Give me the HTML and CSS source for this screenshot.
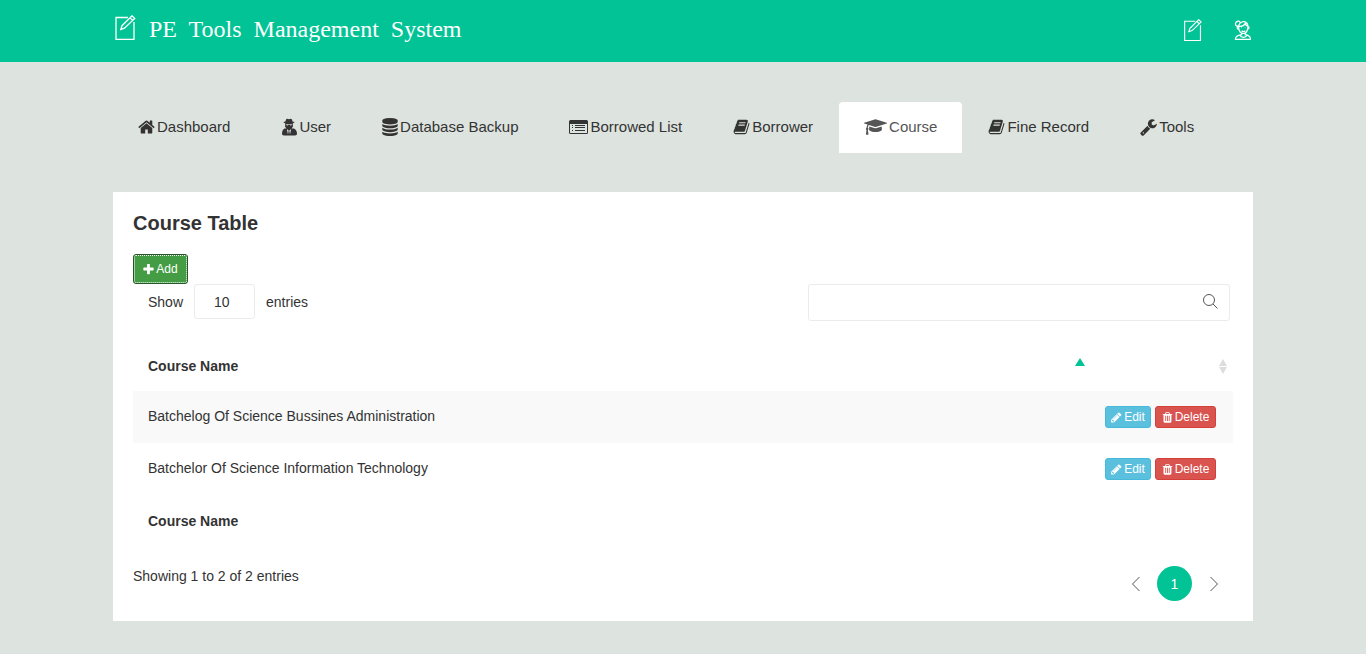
FILE: index.html
```html
<!DOCTYPE html>
<html lang="en">
<head>
<meta charset="utf-8">
<meta name="viewport" content="width=device-width, initial-scale=1">
<title>PE Tools Management System</title>
<link rel="stylesheet" href="styles.css">
</head>
<body>
<svg class="defs" aria-hidden="true">
  <symbol id="note" viewBox="0 0 20 25"><path d="M12.500 2.500H.5v22h18V7M16.500 .8l2.700 2.700L9 13.200l-3.700 1.200 1.200-3.700zM14.500 2.700l2.700 2.700"/></symbol>
  <symbol id="book" viewBox="0 0 1792 1792"><path d="M1703 478q40 57 18 129l-275 906q-19 64-76.500 107.500t-122.500 43.500h-923q-77 0-148.500-53.500t-99.500-131.500q-24-67-2-127 0-4 3-27t4-37q1-8-3-21.500t-3-19.500q2-11 8-21t16.500-23.500 16.500-23.500q23-38 45-91.500t30-91.500q3-10 .5-30t-.5-28q3-11 17-28t17-23q21-36 42-92t25-90q1-9-2.500-32t.5-28q4-13 22-30.500t22-22.500q19-26 42.500-84.500t27.500-96.500q1-8-3-25.500t-2-26.500q2-8 9-18t18-23 17-21q8-12 16.500-30.500t15-35 16-36 19.500-32 26.500-23.500 36-11.500 47.500 5.500l-1 3q38-9 51-9h761q74 0 114 56t18 130l-274 906q-36 119-71.500 153.500t-128.500 34.500h-869q-27 0-38 15-11 16-1 43 24 70 144 70h923q29 0 56-15.500t35-41.500l300-987q7-22 5-57 38 15 59 43zm-1064 2q-4 13 2 22.500t20 9.500h608q13 0 25.500-9.500t16.500-22.500l21-64q4-13-2-22.500t-20-9.500h-608q-13 0-25.500 9.500t-16.500 22.500zm-83 256q-4 13 2 22.500t20 9.500h608q13 0 25.500-9.500t16.500-22.500l21-64q4-13-2-22.500t-20-9.500h-608q-13 0-25.500 9.500t-16.500 22.500z"/></symbol>
  <symbol id="pencil" viewBox="100 100 1640 1600"><path d="M491 1536l91-91-235-235-91 91v107h128v128h107zm523-928q0-22-22-22-10 0-17 7l-542 542q-7 7-7 17 0 22 22 22 10 0 17-7l542-542q7-7 7-17zm-54-192l416 416-832 832h-416v-416zm683 96q0 53-37 90l-166 166-416-416 166-165q36-38 90-38 53 0 91 38l235 234q37 39 37 91z"/></symbol>
  <symbol id="trash" viewBox="100 100 1600 1600"><path d="M704 1376v-704q0-14-9-23t-23-9h-64q-14 0-23 9t-9 23v704q0 14 9 23t23 9h64q14 0 23-9t9-23zm256 0v-704q0-14-9-23t-23-9h-64q-14 0-23 9t-9 23v704q0 14 9 23t23 9h64q14 0 23-9t9-23zm256 0v-704q0-14-9-23t-23-9h-64q-14 0-23 9t-9 23v704q0 14 9 23t23 9h64q14 0 23-9t9-23zm-544-992h448l-48-117q-7-9-17-11h-317q-10 2-17 11zm928 32v64q0 14-9 23t-23 9h-96v948q0 83-47 143.500t-113 60.500h-832q-66 0-113-58.500t-47-141.500v-952h-96q-14 0-23-9t-9-23v-64q0-14 9-23t23-9h309l70-167q15-37 54-63t79-26h320q40 0 79 26t54 63l70 167h309q14 0 23 9t9 23z"/></symbol>
</svg>
<header class="topbar">
  <div class="container topbar-inner">
    <a class="brand" href="#"><svg class="line brand-icon"><use href="#note"/></svg><span>PE&nbsp; Tools&nbsp; Management&nbsp; System</span></a>
    <nav class="quick" aria-label="Account">
      <a href="#" aria-label="Notes"><svg class="line note-icon"><use href="#note"/></svg></a>
      <a href="#" aria-label="Profile"><svg class="line user-icon" viewBox="0 0 18 22"><path d="M5 6.500c1-4 5-5.500 8-3.500 2 1.500 2 4 1.500 6.500-.5 3-2 5-4.500 5s-4.500-2-5-5zM5 6.500C2 8 .5 4.500 2.500 2.500 4 1 6 1.500 6.500 3M5 7c4 .5 6-1 7-3 .5 2 1.500 3 3 3M4.500 10C3 10 3 7.500 4.500 7.500M15 7.500c1.500 0 1 2.500-.5 2.500M8 11.800c1 1 3 1 4 0M8 8.500h.5M11.500 8.500h.5M8 14v2c-4 .5-6.500 1.500-6.500 5h16c0-3.500-2.500-4.500-5.500-5v-2M6 16.500c2 3 6 3 8 0"/></svg></a>
    </nav>
  </div>
</header>
<main class="container">
  <nav class="tabs" aria-label="Main">
    <a class="tab" href="#"><svg class="icon w17" viewBox="64 0 1664 1792"><path d="M1472 992v480q0 26-19 45t-45 19h-384v-384h-256v384h-384q-26 0-45-19t-19-45v-480q0-1 .5-3t.5-3l575-474 575 474q1 2 1 6zm223-69l-62 74q-8 9-21 11h-3q-13 0-21-7l-692-577-692 577q-12 8-24 7-13-2-21-11l-62-74q-8-10-7-23.500t11-21.500l719-599q32-26 76-26t76 26l244 204v-195q0-14 9-23t23-9h192q14 0 23 9t9 23v408l219 182q10 8 11 21.500t-7 23.500z"/></svg>Dashboard</a>
    <a class="tab" href="#"><svg class="icon w15" viewBox="0 0 15 18"><path fill-rule="evenodd" d="M4 3.500C4.300 1.500 5 .5 5.700.7l1.800.5 1.800-.5c.7-.2 1.400.8 1.700 2.800 1.400.2 2 .5 2 .8 0 .4-.8.7-1.700.9v2.300c.5.2.4.7 0 1-.3 1-.8 1.500-1.300 2l2.500.1c2.200 1 3 3.200 3 5.200 0 1.200-.8 1.700-2 1.700H2.500c-1.200 0-2-.5-2-1.700 0-2 .5-4.200 2.500-5.200l2-.1c-.5-.5-1-1-1.300-2-.4-.3-.5-.8 0-1V5.200C2.800 5 2 4.700 2 4.300c0-.3.600-.6 2-.8zM4.500 6.300l.5 1c.7.400 1.500.2 2-.6h1c.5.800 1.300 1 2 .6l.5-1zM5.300 11l1.200 5.500.7-4zM9.700 11l-1.900 1.500.7 4z"/></svg>User</a>
    <a class="tab" href="#"><svg class="icon w15" viewBox="128 0 1536 1792"><path d="M896 768q237 0 443-43t325-127v170q0 69-103 128t-280 93.500-385 34.500-385-34.500-280-93.500-103-128v-170q119 84 325 127t443 43zm0 768q237 0 443-43t325-127v170q0 69-103 128t-280 93.500-385 34.500-385-34.500-280-93.500-103-128v-170q119 84 325 127t443 43zm0-384q237 0 443-43t325-127v170q0 69-103 128t-280 93.500-385 34.500-385-34.500-280-93.500-103-128v-170q119 84 325 127t443 43zm0-1152q208 0 385 34.500t280 93.500 103 128v128q0 69-103 128t-280 93.500-385 34.500-385-34.500-280-93.500-103-128v-128q0-69 103-128t280-93.500 385-34.500z"/></svg>Database Backup</a>
    <a class="tab" href="#"><svg class="icon w18" viewBox="0 0 19 18"><path fill-rule="evenodd" d="M1.500 2h16Q19 2 19 3.500v11q0 1.500-1.500 1.500h-16Q0 16 0 14.500v-11Q0 2 1.500 2zM1 6v9h17V6zM3 7h1v1H3zM6 7h10v1H6zM3 9h1v1H3zM6 9h10v1H6zM3 12h1v1H3zM6 12h10v1H6z"/></svg>Borrowed List</a>
    <a class="tab" href="#"><svg class="icon w17"><use href="#book"/></svg>Borrower</a>
    <a class="tab active" href="#" aria-current="page"><svg class="icon w23" viewBox="0 0 2304 1792"><path d="M1774 836l18 316q4 69-82 128t-235 93.500-323 34.500-323-34.500-235-93.500-82-128l18-316 574 181q22 7 48 7t48-7zm530-324q0 23-22 31l-1120 352q-4 1-10 1t-10-1l-652-206q-43 34-71 111.500t-34 178.500q63 36 63 109 0 69-58 107l58 433q2 14-8 25-9 11-24 11h-192q-15 0-24-11-10-11-8-25l58-433q-58-38-58-107 0-73 65-111 11-207 98-330l-333-104q-22-8-22-31t22-31l1120-352q4-1 10-1t10 1l1120 352q22 8 22 31z"/></svg>Course</a>
    <a class="tab" href="#"><svg class="icon w17"><use href="#book"/></svg>Fine Record</a>
    <a class="tab" href="#"><svg class="icon w17" viewBox="64 0 1664 1792"><path d="M448 1472q0-26-19-45t-45-19-45 19-19 45 19 45 45 19 45-19 19-45zm644-420l-682 682q-37 37-90 37-52 0-91-37l-106-108q-38-36-38-90 0-53 38-91l681-681q39 98 114.500 173.500t173.500 114.500zm634-435q0 39-23 106-47 134-164.500 217.500t-258.500 83.500q-185 0-316.500-131.500t-131.500-316.500 131.500-316.500 316.500-131.500q58 0 121.500 16.500t107.500 46.500q16 11 16 28t-16 28l-293 169v224l193 107q5-3 79-48.500t135.500-81 70.500-35.500q15 0 23.500 10t8.500 25z"/></svg>Tools</a>
  </nav>
  <section class="panel">
    <h1 class="panel-title">Course Table</h1>
    <button class="btn btn-add" type="button"><svg class="btn-icon" viewBox="150 150 1500 1500"><path d="M1600 736v192q0 40-28 68t-68 28h-416v416q0 40-28 68t-68 28h-192q-40 0-68-28t-28-68v-416h-416q-40 0-68-28t-28-68v-192q0-40 28-68t68-28h416v-416q0-40 28-68t68-28h192q40 0 68 28t28 68v416h416q40 0 68 28t28 68z"/></svg>Add</button>
    <div class="controls">
      <label class="length">Show <select class="length-select"><option>10</option><option>25</option><option>50</option></select> entries</label>
      <div class="search">
        <input class="search-input" type="search" aria-label="Search courses">
        <svg class="search-icon" viewBox="0 0 15 15"><circle cx="6" cy="6" r="5.500"/><path d="M10 10l4.500 4.500"/></svg>
      </div>
    </div>
    <table class="courses">
      <thead>
        <tr>
          <th scope="col"><div class="head">Course Name<svg class="sort asc" viewBox="0 0 10 16"><path d="M5 0l5 8H0z"/></svg></div></th>
          <th scope="col" class="actions" aria-label="Actions"><div class="head end"><svg class="sort" viewBox="0 0 10 16"><path d="M5 1l4 7H1zM1 9h8l-4 7z"/></svg></div></th>
        </tr>
      </thead>
      <tbody>
        <tr>
          <td>Batchelog Of Science Bussines Administration</td>
          <td class="actions"><div class="buttons"><button class="btn btn-edit" type="button"><svg class="btn-icon"><use href="#pencil"/></svg>Edit</button><button class="btn btn-delete" type="button"><svg class="btn-icon"><use href="#trash"/></svg>Delete</button></div></td>
        </tr>
        <tr>
          <td>Batchelor Of Science Information Technology</td>
          <td class="actions"><div class="buttons"><button class="btn btn-edit" type="button"><svg class="btn-icon"><use href="#pencil"/></svg>Edit</button><button class="btn btn-delete" type="button"><svg class="btn-icon"><use href="#trash"/></svg>Delete</button></div></td>
        </tr>
      </tbody>
      <tfoot>
        <tr><th scope="col">Course Name</th><th></th></tr>
      </tfoot>
    </table>
    <footer class="panel-foot">
      <p class="info">Showing 1 to 2 of 2 entries</p>
      <nav class="pager" aria-label="Pages">
        <a class="page" href="#" aria-label="Previous"><svg class="chevron" viewBox="0 0 8 16"><path d="M7.500 1l-7 7 7 7"/></svg></a>
        <a class="page current" href="#" aria-current="page">1</a>
        <a class="page" href="#" aria-label="Next"><svg class="chevron" viewBox="0 0 8 16"><path d="M.5 1l7 7-7 7"/></svg></a>
      </nav>
    </footer>
  </section>
</main>
</body>
</html>
```
FILE: styles.css
```css
* { box-sizing: border-box; }
body {
  margin: 0;
  background: #dde3df;
  color: #333;
  font: 14px/20px "Liberation Sans", Arial, sans-serif;
}
a { color: inherit; text-decoration: none; }
.defs { display: none; }
.container { max-width: 1140px; margin: 0 auto; }

.topbar { background: #02c395; color: #fff; }
.topbar-inner { display: flex; justify-content: space-between; align-items: center; height: 62px; }
.brand {
  display: flex;
  align-items: flex-start;
  gap: 13px;
  padding: 0 0 4px 2px;
  font: 24px/28px "Liberation Serif", "Times New Roman", serif;
}
.line { fill: none; stroke: currentColor; stroke-width: 1.3; }
.brand-icon { width: 21px; height: 25px; }
.quick { display: flex; align-items: center; gap: 32px; padding: 0 2px 2px 0; }
.quick a { display: flex; }
.note-icon { width: 18px; height: 22px; }
.user-icon { width: 17px; height: 22px; }

.tabs { display: flex; gap: 1px; padding: 40px 0 39px; }
.tab {
  display: flex;
  align-items: center;
  gap: 2px;
  height: 51px;
  padding: 0 25px 2px;
  font-size: 15px;
  white-space: nowrap;
}
.tab.active { background: #fff; color: #555; border-radius: 4px 4px 0 0; }
.icon { height: 18px; fill: currentColor; flex: none; }
.w15 { width: 16px; }
.w17 { width: 17px; }
.w18 { width: 19px; }
.w23 { width: 23px; }

.panel { background: #fff; padding: 20px; margin-bottom: 32px; }
.panel-title { margin: 0 0 20px; font-size: 20px; line-height: 22px; }
.btn {
  display: inline-flex;
  align-items: center;
  justify-content: center;
  gap: 2px;
  height: 22px;
  padding: 0 5px;
  border: 1px solid;
  border-radius: 3px;
  color: #fff;
  font: 12px/18px "Liberation Sans", Arial, sans-serif;
}
.btn-icon { width: 11px; height: 11px; fill: currentColor; }
.btn-add {
  display: flex;
  width: 55px;
  height: 30px;
  background: #449d44;
  border-color: #255625;
  outline: 1px dotted #fff;
  outline-offset: -2px;
}
.btn-edit { width: 46px; background: #5bc0de; border-color: #46b8da; }
.btn-delete { width: 61px; background: #d9534f; border-color: #d43f3a; }

.controls { display: flex; justify-content: space-between; padding: 0 3px 20px 15px; }
.length { display: flex; align-items: center; gap: 11px; height: 35px; }
.length-select {
  appearance: none;
  width: 61px;
  height: 35px;
  padding: 0 19px;
  border: 1px solid #ebebeb;
  border-radius: 3px;
  background: #fff;
  color: inherit;
  font: inherit;
}
.search { position: relative; width: 422px; }
.search-input {
  width: 100%;
  height: 37px;
  padding: 0 40px 0 12px;
  border: 1px solid #ebebeb;
  border-radius: 3px;
  background: #fff;
  font: inherit;
}
.search-icon {
  position: absolute;
  top: 10px;
  right: 12px;
  width: 15px;
  height: 15px;
  fill: none;
  stroke: #555;
}

.courses { width: 100%; border-collapse: collapse; }
.courses th, .courses td { padding: 15px; text-align: left; vertical-align: top; }
.courses thead th { padding-right: 5px; }
.courses .actions { width: 143px; }
.courses tbody tr:first-child { background: #f9f9f9; }
.courses tbody tr:last-child td { height: 53px; }
.head { display: flex; justify-content: space-between; align-items: center; }
.head.end { justify-content: flex-end; height: 20px; }
.sort { width: 10px; height: 16px; fill: #ddd; }
.sort.asc { fill: #02c395; }
.buttons { display: flex; gap: 4px; }

.panel-foot { display: flex; justify-content: space-between; padding: 20px 2px 0 0; }
.info { margin: 0; }
.pager { display: flex; align-items: center; gap: 4px; }
.page {
  display: flex;
  align-items: center;
  justify-content: center;
  width: 35px;
  height: 35px;
  border-radius: 50%;
}
.page.current { background: #02c395; color: #fff; }
.chevron { width: 8px; height: 16px; fill: none; stroke: #555; }
```
